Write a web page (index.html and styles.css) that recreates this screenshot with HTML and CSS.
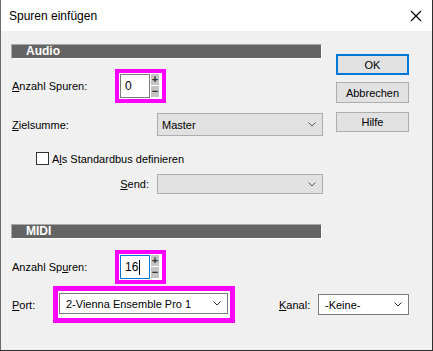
FILE: index.html
```html
<!DOCTYPE html>
<html lang="de">
<head>
    <meta charset="UTF-8">
    <title>Spuren einfügen</title>
    <link rel="stylesheet" href="styles.css">
</head>
<body>
    <div class="window">
        <div class="titlebar">
            <span class="title">Spuren einfügen</span>
            <svg class="close" width="12" height="12" viewBox="0 0 12 12">
                <path d="M1 1 L11 11 M11 1 L1 11" stroke="#000" stroke-width="1.1" fill="none"/>
            </svg>
        </div>
        <div class="content">
            <div class="top">
                <div class="main">
                    <div class="sectionHead">Audio</div>
                    <div class="row spinRow">
                        <span class="label"><u>A</u>nzahl Spuren:</span>
                        <div class="mark">
                            <div class="spin">
                                <div class="field">0</div>
                                <div class="arrows">
                                    <div class="arrow">+</div>
                                    <div class="arrow">&minus;</div>
                                </div>
                            </div>
                        </div>
                    </div>
                    <div class="row selectRow">
                        <span class="label"><u>Z</u>ielsumme:</span>
                        <div class="combo grey tall">
                            <span>Master</span>
                            <svg class="chev" width="8" height="5" viewBox="0 0 8 5"><path d="M0.5 0.5 L4 4 L7.5 0.5" stroke="#555" fill="none"/></svg>
                        </div>
                    </div>
                    <div class="row checkRow">
                        <span class="box"></span>
                        <span>A<u>l</u>s Standardbus definieren</span>
                    </div>
                    <div class="row sendRow">
                        <span class="label right"><u>S</u>end:</span>
                        <div class="combo grey">
                            <span></span>
                            <svg class="chev" width="8" height="5" viewBox="0 0 8 5"><path d="M0.5 0.5 L4 4 L7.5 0.5" stroke="#555" fill="none"/></svg>
                        </div>
                    </div>
                </div>
                <div class="buttons">
                    <button class="btn default">OK</button>
                    <button class="btn">Abbrechen</button>
                    <button class="btn help">Hilfe</button>
                </div>
            </div>
            <div class="midi">
                <div class="sectionHead">MIDI</div>
                <div class="row spinRow midiSpin">
                    <span class="label">Anzahl Sp<u>u</u>ren:</span>
                    <div class="mark">
                        <div class="spin">
                            <div class="field focus">16<span class="caret"></span></div>
                            <div class="arrows">
                                <div class="arrow">+</div>
                                <div class="arrow">&minus;</div>
                            </div>
                        </div>
                    </div>
                </div>
                <div class="row portRow">
                    <span class="label short"><u>P</u>ort:</span>
                    <div class="mark wide">
                        <div class="combo white port">
                            <span>2-Vienna Ensemble Pro 1</span>
                            <svg class="chev" width="8" height="5" viewBox="0 0 8 5"><path d="M0.5 0.5 L4 4 L7.5 0.5" stroke="#333" fill="none"/></svg>
                        </div>
                    </div>
                    <span class="label kanal"><u>K</u>anal:</span>
                    <div class="combo white kanalBox">
                        <span>-Keine-</span>
                        <svg class="chev" width="8" height="5" viewBox="0 0 8 5"><path d="M0.5 0.5 L4 4 L7.5 0.5" stroke="#333" fill="none"/></svg>
                    </div>
                </div>
            </div>
        </div>
    </div>
</body>
</html>
```

FILE: styles.css
```css
body {
    margin: 0;
    background-color: #2e2e2e;
    font-family: "Liberation Sans", Arial, sans-serif;
    font-size: 11px;
    color: #000;
}
.window {
    width: 431px;
    height: 350px;
    border-left: 1px solid #6a6a6a;
    background-color: #f0f0f0;
}
.titlebar {
    height: 31px;
    background-color: #fff;
    display: flex;
    align-items: center;
    justify-content: space-between;
    padding: 0 10px 0 8px;
}
.title {
    font-size: 12px;
}
.content {
    padding-left: 10px;
}
.top {
    display: flex;
}
.main {
    width: 312px;
}
.sectionHead {
    width: 295px;
    height: 13px;
    margin-top: 13px;
    padding-left: 14px;
    background-color: #646464;
    border-top: 1px solid #a8a8a8;
    border-left: 1px solid #a8a8a8;
    border-bottom: 1px solid #fff;
    border-right: 1px solid #fff;
    color: #fff;
    font-weight: bold;
    font-size: 12px;
    line-height: 13px;
}
.row {
    display: flex;
    align-items: center;
}
.label {
    width: 103px;
    padding-left: 1px;
}
.label.right {
    width: 138px;
    padding-left: 0;
    padding-right: 8px;
    text-align: right;
}
.spinRow {
    margin-top: 10px;
}
.mark {
    border: 4px solid #ff00ff;
    padding: 1px;
    background-color: #fff;
}
.spin {
    display: flex;
    gap: 1px;
}
.field {
    width: 24px;
    height: 22px;
    border: 1px solid #7a7a7a;
    background-color: #fff;
    padding-left: 4px;
    line-height: 22px;
    font-size: 12px;
}
.field.focus {
    border-color: #0078d7;
    display: flex;
    align-items: center;
}
.caret {
    width: 1px;
    height: 15px;
    background-color: #000;
    margin-left: 1px;
}
.arrows {
    display: flex;
    flex-direction: column;
    gap: 1px;
    padding-right: 2px;
}
.arrow {
    width: 8px;
    height: 11px;
    background-color: #c4c4c4;
    color: #333;
    font-weight: bold;
    font-size: 11px;
    line-height: 11px;
    text-align: center;
}
.selectRow {
    margin-top: 10px;
}
.combo {
    display: flex;
    align-items: center;
    justify-content: space-between;
    box-sizing: border-box;
    padding: 0 6px 0 4px;
}
.combo.grey {
    width: 166px;
    height: 20px;
    margin-left: 42px;
    background-color: #e1e1e1;
    border: 1px solid #adadad;
}
.combo.tall {
    height: 23px;
}
.combo.white {
    background-color: #fff;
    border: 1px solid #7a7a7a;
    height: 21px;
}
.checkRow {
    margin-top: 16px;
    padding-left: 25px;
    gap: 3px;
}
.box {
    width: 11px;
    height: 11px;
    border: 1px solid #333;
    background-color: #fff;
}
.sendRow {
    margin-top: 9px;
}
.sendRow .combo.grey {
    margin-left: 0;
}
.buttons {
    display: flex;
    flex-direction: column;
    margin-left: 13px;
    margin-top: 23px;
}
.btn {
    width: 73px;
    height: 21px;
    margin-bottom: 7px;
    background-color: #e1e1e1;
    border: 1px solid #adadad;
    font-family: "Liberation Sans", Arial, sans-serif;
    font-size: 11px;
    padding: 0;
}
.btn.default {
    border: 2px solid #0078d7;
}
.btn.help {
    margin-top: 2px;
    height: 20px;
}
.midi .sectionHead {
    margin-top: 30px;
}
.midiSpin {
    margin-top: 11px;
}
.portRow {
    margin-top: 2px;
}
.label.short {
    width: 41px;
}
.mark.wide {
    border-width: 5px;
    padding: 2px 2px 4px 1px;
}
.combo.port {
    width: 169px;
    padding-left: 6px;
}
.kanal {
    width: 39px;
    margin-left: 44px;
    padding-left: 0;
}
.kanalBox {
    width: 91px;
    padding-left: 6px;
}
```
